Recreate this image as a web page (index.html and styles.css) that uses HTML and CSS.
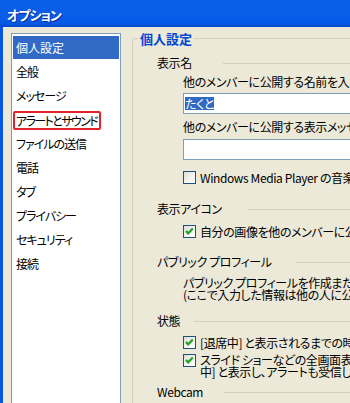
FILE: index.html
```html
<!DOCTYPE html>
<html lang="ja">
<head>
<meta charset="utf-8">
<title>オプション</title>
<link rel="stylesheet" href="styles.css">
</head>
<body>
<div class="window">
  <div class="titlebar"><span class="title">オプション</span></div>
  <div class="client">
    <ul class="nav">
      <li class="nav-item selected">個人設定</li>
      <li class="nav-item">全般</li>
      <li class="nav-item">メッセージ</li>
      <li class="nav-item"><span class="mark">アラートとサウンド</span></li>
      <li class="nav-item">ファイルの送信</li>
      <li class="nav-item">電話</li>
      <li class="nav-item">タブ</li>
      <li class="nav-item">プライバシー</li>
      <li class="nav-item">セキュリティ</li>
      <li class="nav-item">接続</li>
    </ul>
    <fieldset class="group">
      <legend class="group-title">個人設定</legend>
      <div class="group-body">
        <div class="sec-head first sh-name"><span>表示名</span><i class="rule"></i></div>
        <div class="label lbl-name">他のメンバーに公開する名前を入力してください:</div>
        <div class="textbox tb-name"><span class="sel">たくと</span></div>
        <div class="label lbl-msg">他のメンバーに公開する表示メッセージを入力してください:</div>
        <div class="textbox tb-msg"></div>
        <div class="check chk-wmp"><span class="cb"></span><span class="check-text">Windows Media Player の音楽を表示メッセージとして表示する</span></div>

        <div class="sec-head sh-icon"><span>表示アイコン</span><i class="rule"></i></div>
        <div class="check chk-icon"><span class="cb"><svg width="13" height="13" viewBox="0 0 13 13"><polyline points="3,6 5.2,8.3 9.8,3.6" fill="none" stroke="#21A121" stroke-width="2.2"/></svg></span><span class="check-text">自分の画像を他のメンバーに公開する</span></div>

        <div class="sec-head sh-profile"><span>パブリック プロフィール</span><i class="rule"></i></div>
        <p class="para">パブリック プロフィールを作成または編集します<br>(ここで入力した情報は他の人に公開されます)</p>

        <div class="sec-head sh-status"><span>状態</span><i class="rule"></i></div>
        <div class="check chk-away"><span class="cb"><svg width="13" height="13" viewBox="0 0 13 13"><polyline points="3,6 5.2,8.3 9.8,3.6" fill="none" stroke="#21A121" stroke-width="2.2"/></svg></span><span class="check-text">[退席中] と表示されるまでの時間: 5 分</span></div>
        <div class="check chk-full"><span class="cb"><svg width="13" height="13" viewBox="0 0 13 13"><polyline points="3,6 5.2,8.3 9.8,3.6" fill="none" stroke="#21A121" stroke-width="2.2"/></svg></span><span class="check-text two">スライド ショーなどの全画面表示プログラムの実行中は [取り込み<br>中] と表示し、アラートも受信しない</span></div>

        <div class="sec-head sh-webcam"><span>Webcam</span><i class="rule"></i></div>
      </div>
    </fieldset>
  </div>
</div>
</body>
</html>
```

FILE: styles.css
```css
html, body {
  margin: 0;
  padding: 0;
}
body {
  width: 350px;
  height: 403px;
  overflow: hidden;
  background: #ECE9D8;
  font-family: "Noto Sans CJK JP", "Noto Sans", sans-serif;
  font-size: 12px;
  color: #000;
  font-feature-settings: "palt";
  letter-spacing: -0.7px;
}
.window {
  width: 470px;
  height: 403px;
  display: flex;
  flex-direction: column;
}
.titlebar {
  flex: none;
  height: 27px;
  display: flex;
  align-items: center;
  padding-left: 7px;
  background: linear-gradient(#0A5EE6 0%, #0A5DE8 55%, #0659E4 85%, #0549CF 100%);
}
.title {
  color: #fff;
  font-weight: bold;
  font-size: 13px;
  line-height: 13px;
  margin-top: 2px;
  letter-spacing: -1px;
  text-shadow: 1px 1px 0 #0A2A98;
}
.client {
  flex: 1;
  min-height: 0;
  display: flex;
  align-items: flex-start;
  border-left: 3px solid #0756E3;
  padding: 6px 0 0 8px;
}
.nav {
  flex: none;
  width: 106px;
  height: 420px;
  margin: 0;
  padding: 2px 1px;
  list-style: none;
  background: #fff;
  border: 1px solid #7F9DB9;
  letter-spacing: -1px;
}
.nav-item {
  height: 24px;
  line-height: 24px;
  padding-left: 3px;
  white-space: nowrap;
}
.nav-item.selected {
  background: linear-gradient(#316AC5 0, #316AC5 23px, transparent 23px);
  color: #fff;
  letter-spacing: 0;
}
.mark {
  display: inline-block;
  margin-left: -3px;
  padding: 1px 2px 1px 1px;
  line-height: 13px;
  border: 2px solid #E2232B;
  border-radius: 2px;
  vertical-align: middle;
  position: relative;
  top: -1px;
  letter-spacing: -1.6px;
}
.group {
  flex: none;
  width: 400px;
  height: 420px;
  margin: -1px 0 0 11px;
  padding: 0;
  min-width: 0;
  border: 1px solid #D0D0BF;
  border-radius: 3px;
}
.group-title {
  margin-left: 5px;
  padding: 0 2px;
  color: #0046D5;
  font-weight: bold;
  font-size: 13px;
  line-height: 13px;
  letter-spacing: 0;
}
.group-body {
  padding-left: 24px;
  display: flex;
  flex-direction: column;
  align-items: flex-start;
  white-space: nowrap;
  letter-spacing: -0.4px;
}
.sec-head {
  display: flex;
  align-items: center;
  align-self: stretch;
  height: 12px;
  line-height: 12px;
}
.rule {
  flex: 1;
  height: 1px;
  margin-left: 20px;
  background: #D0D0BF;
}
.sh-name .rule { margin-left: 31px; }
.sh-icon .rule { margin-left: 26px; }
.sh-profile .rule { margin-left: 24px; }
.sh-status .rule { margin-left: 14px; }
.sh-webcam .rule { margin-left: 21px; }
.label, .textbox, .check, .para {
  margin-left: 26px;
}
.label {
  line-height: 12px;
}
.textbox {
  box-sizing: border-box;
  width: 300px;
  height: 21px;
  padding: 0 1px;
  display: flex;
  align-items: center;
  background: #fff;
  border: 1px solid #7F9DB9;
}
.sel {
  background: #316AC5;
  color: #fff;
  line-height: 13px;
}
.check {
  display: flex;
  align-items: flex-start;
  gap: 4px;
}
.cb {
  flex: none;
  box-sizing: border-box;
  width: 13px;
  height: 13px;
  border: 1px solid #1C5180;
  background: linear-gradient(135deg, #DCDCD7 0%, #F5F5F2 60%, #FFFFFF 100%);
  display: flex;
}
.cb svg {
  margin: -1px;
}
.check-text {
  line-height: 13px;
}
.check-text.two {
  line-height: 12px;
}
.para {
  margin-top: 9px;
  margin-bottom: 0;
  line-height: 12px;
}
.sec-head.first { margin-top: 12px; }
.lbl-name { margin-top: 7px; }
.tb-name { margin-top: 5px; }
.lbl-msg { margin-top: 7px; }
.tb-msg { margin-top: 6px; }
.chk-wmp { margin-top: 11px; }
.sh-icon { margin-top: 19px; }
.chk-icon { margin-top: 10px; }
.sh-profile { margin-top: 18px; }
.sh-status { margin-top: 14px; }
.chk-away { margin-top: 9px; }
.chk-full { margin-top: 5px; }
.sh-webcam { margin-top: 8px; }
```
